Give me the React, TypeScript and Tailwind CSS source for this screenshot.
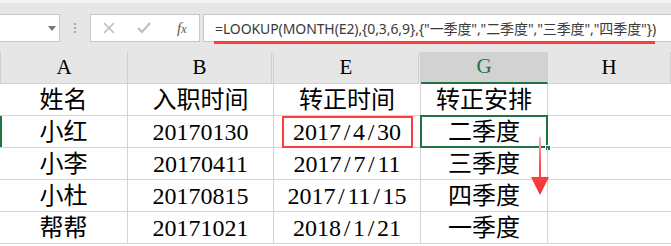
import React from "react";

const serif = "font-['Liberation_Serif','Noto_Sans_CJK_SC',serif]";

const rows = [
  { name: "姓名", join: "入职时间", formal: "转正时间", plan: "转正安排" },
  { name: "小红", join: "20170130", formal: "2017/4/30", plan: "二季度" },
  { name: "小李", join: "20170411", formal: "2017/7/11", plan: "三季度" },
  { name: "小杜", join: "20170815", formal: "2017/11/15", plan: "四季度" },
  { name: "帮帮", join: "20171021", formal: "2018/1/21", plan: "一季度" },
];

// SimSun slashes are half width, Liberation Serif ones are narrow
const DateText = ({ text }: { text: string }) => {
  if (!text.includes("/")) return <>{text}</>;
  const parts = text.split("/");
  return (
    <>
      {parts.map((p, i) => (
        <React.Fragment key={i}>
          {i > 0 && <span className="inline-block w-[0.5em] text-center">/</span>}
          {p}
        </React.Fragment>
      ))}
    </>
  );
};

const Toolbar = () => (
  <div className="h-[52px] bg-[#e6e6e6] border-t-[3px] border-t-[#f3f3f3] flex items-start pt-[11px] gap-0">
    <div className="relative w-[60px] h-[28px] bg-white border border-[#c6c6c6] border-l-0">
      <div className="absolute left-[48px] top-[11px] w-0 h-0 border-l-[4px] border-r-[4px] border-t-[5px] border-l-transparent border-r-transparent border-t-[#777]" />
    </div>
    <div className="w-[30px] h-[28px] flex flex-col items-center justify-center gap-[2px]">
      <span className="w-[2px] h-[2px] bg-[#aaa]" />
      <span className="w-[2px] h-[2px] bg-[#aaa]" />
      <span className="w-[2px] h-[2px] bg-[#aaa]" />
    </div>
    <div className="w-[110px] h-[28px] bg-white border border-[#c6c6c6] flex items-center">
      <svg width="12" height="12" viewBox="0 0 12 12" className="ml-[12px]">
        <path d="M1 1 L11 11 M11 1 L1 11" stroke="#bdbdbd" strokeWidth="1.6" />
      </svg>
      <svg width="14" height="12" viewBox="0 0 14 12" className="ml-[22px]">
        <path d="M1 6 L5 10 L13 1" stroke="#bdbdbd" strokeWidth="2" fill="none" />
      </svg>
      <span className={`ml-[26px] italic text-[15px] text-[#555] ${serif}`}>
        <i>f</i>
        <span className="text-[12px]">x</span>
      </span>
    </div>
    <div className="relative flex-1 ml-[3px] h-[28px] bg-white border border-[#c6c6c6] border-r-0 flex items-center pl-[11px]">
      <span className="text-[14px] text-[#3a3a3a] whitespace-nowrap font-['Noto_Sans','Noto_Sans_CJK_SC',sans-serif] tracking-[-0.1px]">
        =LOOKUP(MONTH(E2),{"{"}0,3,6,9{"}"},{"{"}"一季度","二季度","三季度","四季度"{"}"})
      </span>
      <div className="absolute left-[10px] w-[441px] top-[26px] h-[3px] bg-[#ff3b3b]" />
    </div>
  </div>
);

const headers = ["A", "B", "E", "G", "H"];

export default function App() {
  return (
    <div className="w-[671px] h-[246px] overflow-hidden bg-white relative">
      <Toolbar />
      <div className={`grid grid-cols-[128px_146px_147px_127px_1fr] ${serif}`}>
        {headers.map((h, i) => (
          <div
            key={h}
            className={`h-[32px] flex items-center justify-center text-[21px] border-b ${
              i === 0 ? "border-l border-l-[#cfcfcf]" : ""
            } ${
              i === 1 || i === 2 ? "border-r-[3px] border-r-[#d0d0d0] border-double" : "border-r border-r-[#cfcfcf]"
            } ${
              h === "G"
                ? "bg-[#d2d2d2] text-[#217346] border-b-[2px] border-b-[#217346]"
                : "bg-[#e6e6e6] text-black border-b-[#d4d4d4]"
            }`}
          >
            {h}
          </div>
        ))}
        {rows.map((r, ri) => (
          <React.Fragment key={ri}>
            <div className="relative h-[32px] flex items-center justify-center text-[24px] border-r border-b border-[#d4d4d4]">
              {ri === 1 && <div className="absolute left-0 top-0 w-[2px] h-full bg-[#217346]" />}
              {r.name}
            </div>
            <div className="h-[32px] flex items-center justify-center text-[24px] border-r border-b border-[#d4d4d4]">
              {r.join}
            </div>
            <div className="relative h-[32px] flex items-center justify-center text-[24px] border-r border-b border-[#d4d4d4]">
              {ri === 1 && (
                <div className="absolute left-[8px] right-[7px] top-0 -bottom-[1px] border-2 border-[#ff3b3b]" />
              )}
              <DateText text={r.formal} />
            </div>
            <div className="relative h-[32px] flex items-center justify-center text-[24px] border-r border-b border-[#d4d4d4]">
              {ri === 1 && (
                <>
                  <div className="absolute -left-[1px] -top-[1px] right-[-1px] bottom-[-1px] border-2 border-[#217346]" />
                  <div className="absolute -right-[4px] -bottom-[4px] w-[6px] h-[6px] bg-[#217346] border border-white" />
                </>
              )}
              {r.plan}
            </div>
            <div className="h-[32px] border-b border-[#d4d4d4]" />
          </React.Fragment>
        ))}
      </div>
      <svg className="absolute left-[530px] top-[137px]" width="20" height="60" viewBox="0 0 20 60">
        <defs>
          <linearGradient id="arr" x1="0" y1="0" x2="0" y2="1">
            <stop offset="0" stopColor="#ffb0b0" />
            <stop offset="0.5" stopColor="#ff4a4a" />
            <stop offset="1" stopColor="#f03030" />
          </linearGradient>
        </defs>
        <path d="M9 0 L11 0 L11 40 L19 40 L10 58 L1 40 L9 40 Z" fill="url(#arr)" />
      </svg>
    </div>
  );
}
